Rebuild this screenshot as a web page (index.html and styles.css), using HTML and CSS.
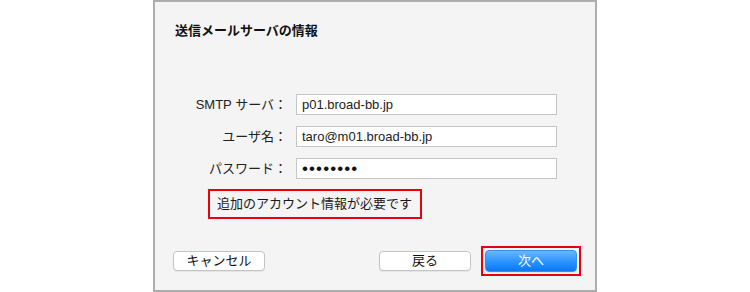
FILE: index.html
```html
<!DOCTYPE html>
<html lang="ja">
<head>
<meta charset="utf-8">
<link rel="stylesheet" href="styles.css">
</head>
<body>
<div class="panel">
  <div class="title">送信メールサーバの情報</div>
  <div class="form">
    <div class="label">SMTP サーバ：</div>
    <div class="field">p01.broad-bb.jp</div>
    <div class="label">ユーザ名：</div>
    <div class="field">taro@m01.broad-bb.jp</div>
    <div class="label">パスワード：</div>
    <div class="field dots">••••••••</div>
  </div>
  <div class="notice-row">
    <div class="notice">追加のアカウント情報が必要です</div>
  </div>
  <div class="buttons">
    <div class="btn">キャンセル</div>
    <div class="spacer"></div>
    <div class="btn">戻る</div>
    <div class="hl">
      <div class="btn primary">次へ</div>
    </div>
  </div>
</div>
</body>
</html>
```
FILE: styles.css
```css
html, body {
  margin: 0;
  padding: 0;
  background: #ffffff;
}
body {
  font-family: "Liberation Sans", "Noto Sans CJK JP", sans-serif;
  font-size: 13px;
  color: #1a1a1a;
}
.panel {
  box-sizing: border-box;
  margin-left: 153px;
  width: 444px;
  height: 292px;
  background: #f4f4f4;
  border: 2px solid #adadad;
  display: flex;
  flex-direction: column;
}
.title {
  margin-top: 21px;
  padding-left: 20px;
  font-weight: bold;
  line-height: 16px;
  color: #111;
}
.form {
  margin-top: 55px;
  display: grid;
  grid-template-columns: 132px 261px;
  column-gap: 9px;
  row-gap: 11px;
}
.label {
  text-align: right;
  line-height: 21px;
  height: 21px;
  color: #222;
}
.field {
  box-sizing: border-box;
  height: 21px;
  background: #fff;
  border: 1px solid #c6c6c6;
  padding-left: 5px;
  line-height: 19px;
  color: #222;
}
.dots {
  font-size: 17px;
  letter-spacing: 1.1px;
  color: #111;
}
.notice-row {
  margin-top: 10px;
  padding-left: 53px;
  display: flex;
}
.notice {
  box-sizing: border-box;
  height: 30px;
  width: 214px;
  border: 2px solid #e8000f;
  padding-left: 7px;
  line-height: 26px;
  color: #1a1a1a;
}
.buttons {
  margin-top: auto;
  padding: 0 14px 14px 18px;
  display: flex;
  align-items: center;
}
.spacer {
  flex: 1;
}
.btn {
  box-sizing: border-box;
  width: 92px;
  height: 20px;
  border: 1px solid #c3c3c3;
  border-radius: 4px;
  background: #ffffff;
  box-shadow: 0 1px 0 rgba(0,0,0,0.06);
  text-align: center;
  line-height: 18px;
  color: #111;
}
.hl {
  box-sizing: border-box;
  margin-left: 10px;
  width: 100px;
  height: 30px;
  border: 2px solid #e8000f;
  padding: 2px;
}
.btn.primary {
  height: 22px;
  border: 1px solid #3a8ef0;
  background: linear-gradient(#6cb6ff, #2f96ff 50%, #0a78f5);
  color: #ffffff;
  line-height: 20px;
}
```
